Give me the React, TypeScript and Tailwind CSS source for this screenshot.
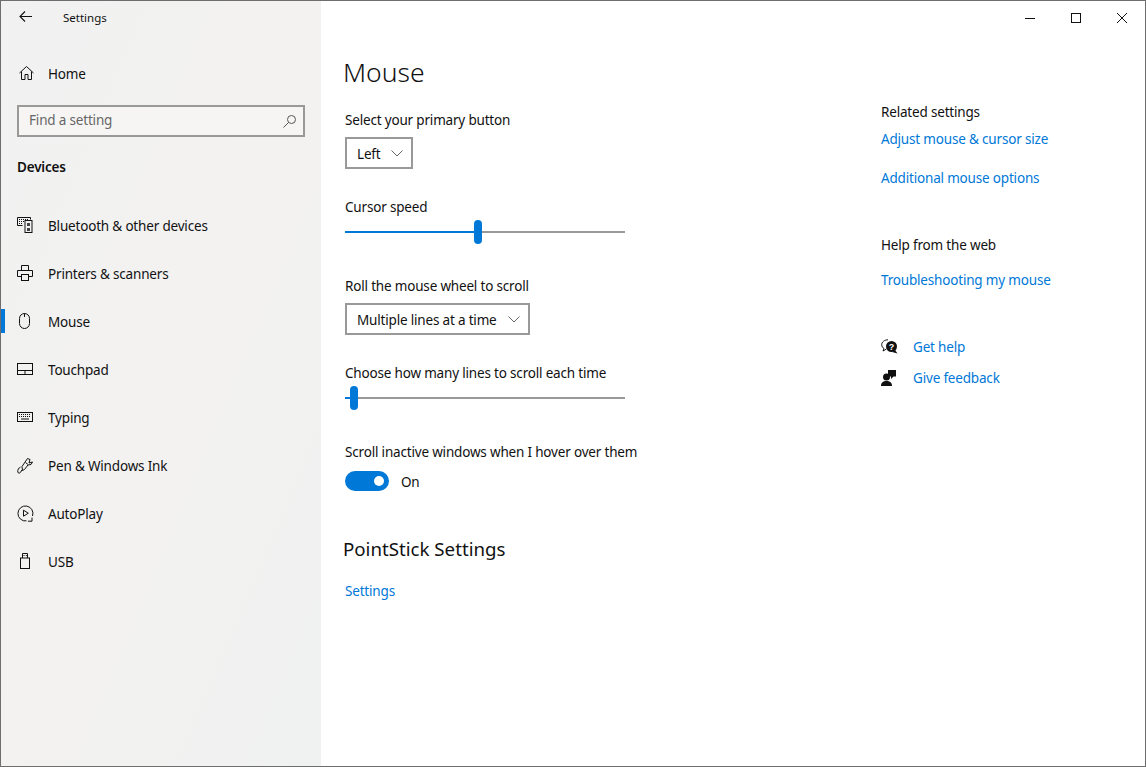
const font = "font-['Noto_Sans',sans-serif]";

function BackIcon() {
  return (
    <svg width="13" height="11" viewBox="0 0 13 11" fill="none" stroke="#111" strokeWidth="1.1" className="ml-[2px] mb-[2px]">
      <path d="M13 5.500H1M6 .5l-5 5 5 5" />
    </svg>
  );
}

function HomeIcon() {
  return (
    <svg width="15" height="14" viewBox="0 0 15 14" fill="none" stroke="#111" strokeWidth="1">
      <path d="M.5 7l7-6.500 7 6.500" />
      <path d="M2.500 5.500v8H6v-5h3v5h3.500v-8" />
    </svg>
  );
}

function SearchIcon() {
  return (
    <svg width="13" height="13" viewBox="0 0 13 13" fill="none" stroke="#555" strokeWidth="1">
      <circle cx="8.500" cy="4.500" r="4" />
      <path d="M5.500 7.500l-5 5" />
    </svg>
  );
}

function ChevronIcon() {
  return (
    <svg width="12" height="7" viewBox="0 0 12 7" fill="none" stroke="#666" strokeWidth="1">
      <path d="M.5.5L6 6l5.500-5.500" />
    </svg>
  );
}

function BluetoothIcon() {
  return (
    <svg width="16" height="16" viewBox="0 0 16 16" fill="none" stroke="#111" strokeWidth="1">
      <path d="M13.500 2.500V.5H.5v8h5" />
      <path d="M2 2.500h9M2 4.500h9M2 6.500h3" strokeDasharray="1 1" />
      <rect x="8" y="3.500" width="7" height="12" fill="#f2f2f2" />
      <rect x="10" y="6" width="3" height="3" fill="#444" stroke="none" />
      <rect x="10" y="11" width="3" height="3" fill="#444" stroke="none" />
    </svg>
  );
}

function PrinterIcon() {
  return (
    <svg width="16" height="16" viewBox="0 0 16 16" fill="none" stroke="#111" strokeWidth="1">
      <path d="M4.500 5V.5h7V5" />
      <path d="M4 11.500H.5v-6h15v6H12" />
      <rect x="4.500" y="9.500" width="7" height="6" />
    </svg>
  );
}

function MouseIcon() {
  return (
    <svg width="11" height="16" viewBox="0 0 11 16" fill="none" stroke="#111" strokeWidth="1">
      <rect x=".5" y=".5" width="10" height="15" rx="5" />
      <path d="M5.500.5V4" />
    </svg>
  );
}

function TouchpadIcon() {
  return (
    <svg width="16" height="12" viewBox="0 0 16 12" fill="none" stroke="#111" strokeWidth="1">
      <rect x=".5" y=".5" width="15" height="11" />
      <path d="M.5 7.500h15M8 7.500v4" />
    </svg>
  );
}

function KeyboardIcon() {
  return (
    <svg width="16" height="10" viewBox="0 0 16 10" fill="none" stroke="#111" strokeWidth="1">
      <rect x=".5" y=".5" width="15" height="9" />
      <path d="M2 2.500h12M2 4.500h12" strokeDasharray="1 1" />
      <path d="M4 7h8" />
    </svg>
  );
}

function PenIcon() {
  return (
    <svg width="17" height="17" viewBox="0 0 17 17" fill="none" stroke="#111" strokeWidth="1">
      <path d="M5.500 13.500L5 9.500 10.500 1.500l2.500 1-1 3.500 3.500-1-1.500 2.500-3 .5-3.500 4.500z" />
      <path d="M8.500 5.500l2.500 2" />
      <path d="M3.500 10C1.500 11 .5 13 .8 15c.3 1.500 2 1.500 3 0l1-2" />
    </svg>
  );
}

function AutoPlayIcon() {
  return (
    <svg width="17" height="17" viewBox="0 0 17 17" fill="none" stroke="#111" strokeWidth="1">
      <path d="M9.500 15.900A7.500 7.500 0 1 1 15.500 11" />
      <path d="M6.500 5.200v6l4.800-3z" />
      <path d="M11 16.200h4v-3.600" />
    </svg>
  );
}

function UsbIcon() {
  return (
    <svg width="10" height="16" viewBox="0 0 10 16" fill="none" stroke="#111" strokeWidth="1">
      <path d="M2.500 5V.5h5V5" />
      <rect x=".5" y="5" width="9" height="10.500" />
      <path d="M3.500 2.500h1M5.800 2.500h1" />
    </svg>
  );
}

function HelpIcon() {
  return (
    <svg width="17" height="16" viewBox="0 0 17 16">
      <path d="M7 .8C3.500.8.7 3 .7 5.700c0 1.700 1 3 2.300 3.900L2 12l3.200-1.800" fill="none" stroke="#111" strokeWidth="1" />
      <circle cx="10.500" cy="7.500" r="5.500" fill="#111" />
      <path d="M14 11l2.500 3.500L11 13z" fill="#111" />
      <text x="10.500" y="11" textAnchor="middle" fontSize="9" fontWeight="700" fill="#fff" fontFamily="Liberation Sans">?</text>
    </svg>
  );
}

function FeedbackIcon() {
  return (
    <svg width="15" height="16" viewBox="0 0 15 16" fill="#111">
      <path d="M7 0h8v6.500h-2.500L10 9V6.500H7z" />
      <circle cx="5.500" cy="7" r="3.500" />
      <path d="M0 16c0-3.500 2-5 5.500-5s5.500 1.500 5.500 5z" />
    </svg>
  );
}

const navItems = [
  { label: "Bluetooth & other devices", icon: <BluetoothIcon /> },
  { label: "Printers & scanners", icon: <PrinterIcon /> },
  { label: "Mouse", icon: <div className="ml-[2px]"><MouseIcon /></div>, active: true },
  { label: "Touchpad", icon: <TouchpadIcon /> },
  { label: "Typing", icon: <KeyboardIcon /> },
  { label: "Pen & Windows Ink", icon: <PenIcon /> },
  { label: "AutoPlay", icon: <AutoPlayIcon /> },
  { label: "USB", icon: <div className="ml-[3px]"><UsbIcon /></div> },
];

function Dropdown({ label, width }: { label: string; width: string }) {
  return (
    <div className={`${width} h-8 mt-[7px] border-2 border-[#999] flex items-center justify-between pl-[10px] pr-2`}>
      <span className="pt-[2px]">{label}</span>
      <ChevronIcon />
    </div>
  );
}

function Slider({ fill }: { fill: string }) {
  return (
    <div className="w-[280px] h-6 flex items-center">
      <div className={`${fill} h-0.5 bg-[#0078d7]`} />
      <div className="w-2 h-6 rounded-full bg-[#0078d7] shrink-0" />
      <div className="flex-1 h-0.5 bg-[#999]" />
    </div>
  );
}

function Label({ children, className = "" }: { children: string; className?: string }) {
  return <div className={`h-5 leading-5 ${className}`}>{children}</div>;
}

function LinkText({ children, className = "" }: { children: string; className?: string }) {
  return <div className={`h-5 leading-5 text-[#0078d7] ${className}`}>{children}</div>;
}

export default function App() {
  return (
    <div className={`${font} w-[1146px] h-[767px] flex border border-[#6e6e6e] bg-white text-[13.5px] tracking-[-0.18px] text-[#111] overflow-hidden`}>
      <aside className="w-[320px] shrink-0 bg-gradient-to-br from-[#f1f1f1] via-[#f3f2f1] to-[#f0f1f1] flex flex-col">
        <div className="h-[33px] flex items-center pl-[16px]">
          <BackIcon />
          <span className="ml-[31px] text-[11.5px] tracking-normal">Settings</span>
        </div>
        <div className="h-12 mt-[15px] flex items-center pl-[18px]">
          <HomeIcon />
          <span className="ml-[14px] pt-[2px]">Home</span>
        </div>
        <div className="mx-4 mt-2 w-[288px] h-8 border-2 border-[#999] bg-[#f6f5f4] flex items-center justify-between pl-[10px] pr-[7px] text-[#666]">
          <span className="pb-[1px]">Find a setting</span>
          <SearchIcon />
        </div>
        <div className="h-5 mt-5 ml-4 leading-5 font-semibold">Devices</div>
        <nav className="mt-[24px] flex flex-col">
          {navItems.map((item) => (
            <div key={item.label} className="h-12 flex items-center">
              <div className={`w-1 h-6 ${item.active ? "bg-[#0078d7]" : ""}`} />
              <div className="w-[43px] pl-[12px] flex justify-start">{item.icon}</div>
              <span className="pt-[2px]">{item.label}</span>
            </div>
          ))}
        </nav>
      </aside>

      <main className="flex-1 flex flex-col">
        <div className="h-[33px] flex justify-end items-center">
          <svg width="10" height="10" viewBox="0 0 10 10" fill="none" stroke="#111" className="mr-[36px]"><path d="M0 5.500h10" /></svg>
          <svg width="10" height="10" viewBox="0 0 10 10" fill="none" stroke="#111" className="mr-[36px]"><rect x=".5" y=".5" width="9" height="9" /></svg>
          <svg width="10" height="10" viewBox="0 0 10 10" fill="none" stroke="#111" className="mr-[18px]"><path d="M0 0l10 10M10 0L0 10" /></svg>
        </div>
        <div className="flex">
          <div className="w-[560px] pl-6 flex flex-col items-start">
            <h1 className="ml-[-2px] mt-[18px] h-10 leading-10 text-[26.5px] font-light tracking-normal">Mouse</h1>
            <Label className="mt-[18px]">Select your primary button</Label>
            <Dropdown label="Left" width="w-[68px]" />
            <Label className="mt-7">Cursor speed</Label>
            <div className="mt-[3px]"><Slider fill="w-[129px]" /></div>
            <Label className="mt-[32px]">Roll the mouse wheel to scroll</Label>
            <Dropdown label="Multiple lines at a time" width="w-[185px]" />
            <Label className="mt-7">Choose how many lines to scroll each time</Label>
            <div className="mt-[3px]"><Slider fill="w-[5px]" /></div>
            <Label className="mt-[32px]">Scroll inactive windows when I hover over them</Label>
            <div className="mt-[9px] h-5 flex items-center">
              <div className="w-11 h-5 rounded-full bg-[#0078d7] flex items-center justify-end pr-[5px]">
                <div className="w-[10px] h-[10px] rounded-full bg-white" />
              </div>
              <span className="ml-3 pt-[3px]">On</span>
            </div>
            <h2 className="ml-[-2px] mt-[44px] h-7 leading-7 text-[18.7px] tracking-normal">PointStick Settings</h2>
            <LinkText className="mt-[18px]">Settings</LinkText>
          </div>
          <div className="mt-[68px] flex flex-col items-start">
            <Label>Related settings</Label>
            <LinkText className="mt-[7px]">Adjust mouse &amp; cursor size</LinkText>
            <LinkText className="mt-[19px]">Additional mouse options</LinkText>
            <Label className="mt-[47px]">Help from the web</Label>
            <LinkText className="mt-[15px]">Troubleshooting my mouse</LinkText>
            <div className="mt-[47px] h-5 flex items-center">
              <div className="w-8"><HelpIcon /></div>
              <LinkText>Get help</LinkText>
            </div>
            <div className="mt-[11px] h-5 flex items-center">
              <div className="w-8"><FeedbackIcon /></div>
              <LinkText>Give feedback</LinkText>
            </div>
          </div>
        </div>
      </main>
    </div>
  );
}
